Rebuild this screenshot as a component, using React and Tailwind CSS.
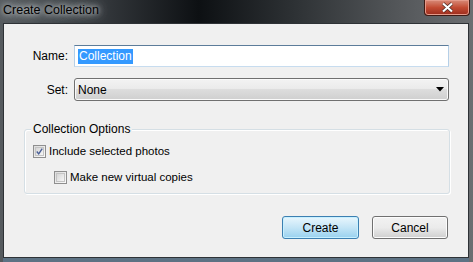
import React from "react";

const font = { fontFamily: '"Liberation Sans", Arial, sans-serif' };

function Checkbox({ checked }) {
  return (
    <span className="flex h-[13px] w-[13px] items-center justify-center border border-[#8f8f8f] bg-gradient-to-br from-[#dcdcdc] to-[#fbfbfb] p-[1px]">
      <span className="flex h-full w-full items-center justify-center border border-[#c4c4c4] bg-gradient-to-br from-[#d6d6d6] to-[#f6f6f6]">
        {checked ? (
          <svg width="9" height="9" viewBox="0 0 9 9">
            <path d="M1 4.5 L3.5 7.5 L8 0.8" fill="none" stroke="#4a5f97" strokeWidth="1.8" />
          </svg>
        ) : null}
      </span>
    </span>
  );
}

function Button({ children, primary }) {
  return (
    <button
      type="button"
      className={
        primary
          ? "h-[23px] w-[77px] rounded-[3px] border border-[#3c7fb1] bg-gradient-to-b from-[#e9f6fd] via-[#c4e5f6] to-[#98d1ef] text-[12px] text-black shadow-[inset_0_0_0_1px_#c7f0ff]"
          : "h-[23px] w-[76px] rounded-[3px] border border-[#707070] bg-gradient-to-b from-[#f2f2f2] via-[#ebebeb] to-[#cfcfcf] text-[12px] text-black shadow-[inset_0_0_0_1px_#fcfcfc]"
      }
    >
      {children}
    </button>
  );
}

export default function App() {
  return (
    <div
      className="relative flex h-[262px] w-[473px] flex-col overflow-hidden bg-[linear-gradient(90deg,#565b5f_0%,#33373b_22%,#0d1013_42%,#2d3134_62%,#55585b_85%,#6b6e71_100%)]"
      style={font}
    >
      <div className="flex h-[23px] items-start justify-between pl-[3px]">
        <span className="mt-[2px] text-[12.5px] leading-[16px] text-black [text-shadow:0_0_5px_#d4d8db,0_0_10px_#c0c4c8,0_0_14px_#a8adb2]">
          Create Collection
        </span>
        <div className="mr-[3px] flex h-[16px] w-[46px] items-center justify-center rounded-b-[4px] border border-t-0 border-[#3f1a14] bg-gradient-to-b from-[#d78a78] via-[#c24b33] to-[#9b2b1c] shadow-[inset_0_0_0_1px_#e49a8a]">
          <svg width="13" height="11" viewBox="0 0 13 11">
            <path d="M2 1.5 L11 9.5 M11 1.5 L2 9.5" stroke="#4a2a24" strokeWidth="3.6" />
            <path d="M2 1.5 L11 9.5 M11 1.5 L2 9.5" stroke="#ffffff" strokeWidth="2.2" />
          </svg>
        </div>
      </div>

      <div className="mx-[3px] mb-[4px] mr-[4px] flex flex-1 flex-col border border-[#2e3236] bg-[#f0f0f0] shadow-[0_4px_0_#5d7284]">
        <div className="mt-[21px] flex items-center">
          <span className="w-[64px] text-right text-[12px] text-black">Name:</span>
          <div className="ml-[6px] flex h-[22px] w-[375px] items-center border border-[#abadb3] border-t-[#5c7c9a] border-x-[#b5cfe7] border-b-[#c7dcef] bg-white pl-[3px]">
            <span className="bg-[#3399ff] px-[1px] text-[12px] leading-[15px] text-white">Collection</span>
          </div>
        </div>

        <div className="mt-[11px] flex items-center">
          <span className="w-[64px] text-right text-[12px] text-black">Set:</span>
          <div className="ml-[6px] flex h-[23px] w-[375px] items-center justify-between rounded-[3px] border border-[#707070] bg-[linear-gradient(180deg,#f3f3f3_0%,#ebebeb_45%,#dddddd_50%,#cfcfcf_100%)] pl-[3px] pr-[4px] shadow-[inset_0_0_0_1px_#fafafa]">
            <span className="text-[12px] text-black">None</span>
            <svg width="8" height="5" viewBox="0 0 8 5">
              <path d="M0 0 H8 L4 4.5 Z" fill="#000" />
            </svg>
          </div>
        </div>

        <div className="relative mx-[20px] mt-[28px] h-[65px] w-[426px] rounded-[3px] border border-[#d5dfe5] shadow-[inset_1px_1px_0_#ffffff,1px_1px_0_#ffffff]">
          <span className="absolute -top-[8px] left-[6px] bg-[#f0f0f0] px-[2px] text-[12px] leading-[14px] text-black">
            Collection Options
          </span>
          <div className="ml-[8px] mt-[14px] flex items-center gap-[3px]">
            <Checkbox checked />
            <span className="text-[11.5px] leading-[14px] text-black">Include selected photos</span>
          </div>
          <div className="ml-[29px] mt-[12px] flex items-center gap-[3px]">
            <Checkbox />
            <span className="text-[11.5px] leading-[14px] text-black">Make new virtual copies</span>
          </div>
        </div>

        <div className="mt-[22px] flex justify-end gap-[13px] pr-[20px]">
          <Button primary>Create</Button>
          <Button>Cancel</Button>
        </div>
      </div>
    </div>
  );
}
